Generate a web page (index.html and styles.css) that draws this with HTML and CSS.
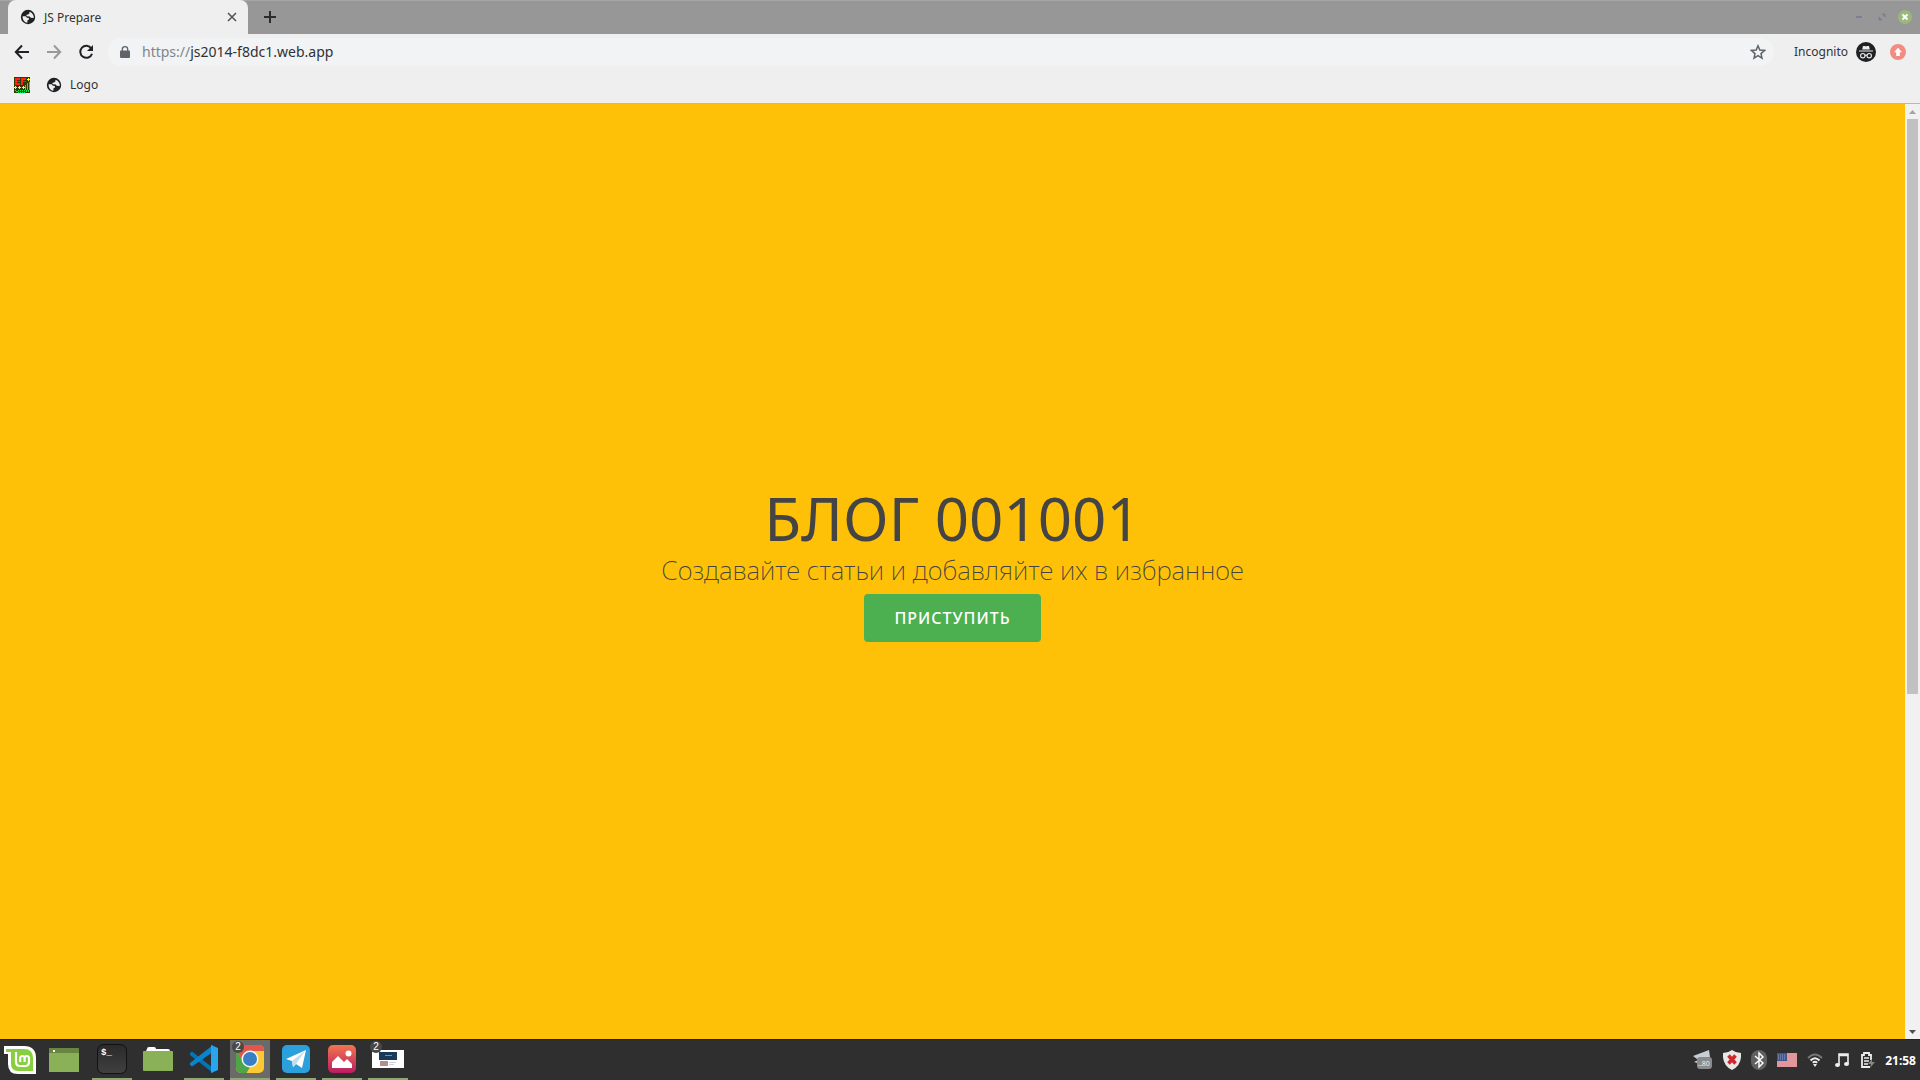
FILE: index.html
```html
<!DOCTYPE html>
<html lang="ru">
<head>
<meta charset="utf-8">
<title>JS Prepare</title>
<link rel="stylesheet" href="styles.css">
</head>
<body>
<svg class="sprite" aria-hidden="true">
  <symbol id="globe" viewBox="0 0 16 16">
    <circle cx="8" cy="8" r="7.2" fill="#202124"/>
    <path d="M2.6 7.2h3l1.3 1.5 2 .2v1.5l-1.5 1.2v2.2C4.5 13.4 2.4 10.800 2.600 7.200zM8.200 2.500l1.200.3v1.700l-1.300 1-1.600.2v1.600l3.200.2 1 1.200 1.600.2 1.800-.5C13 4.400 11 2.600 8.200 2.500z" fill="#eee"/>
  </symbol>
</svg>
<div class="screen">
  <header class="browser">
    <div class="tabs">
      <div class="tab">
        <svg class="favicon"><use href="#globe"/></svg>
        <span class="tab-title">JS Prepare</span>
        <button class="plain" aria-label="Close tab"><svg width="10" height="10" viewBox="0 0 10 10"><path d="M1 1l8 8M9 1l-8 8" stroke="#555" stroke-width="1.600"/></svg></button>
      </div>
      <button class="plain new-tab" aria-label="New tab"><svg width="12" height="12" viewBox="0 0 12 12"><path d="M6 0v12M0 6h12" stroke="#2b2b2b" stroke-width="2"/></svg></button>
      <div class="window-buttons">
        <button class="plain" aria-label="Minimize"><svg width="18" height="18" viewBox="0 0 18 18"><path d="M6 9h6" stroke="#7c8090" stroke-width="2"/></svg></button>
        <button class="plain" aria-label="Maximize"><svg width="18" height="18" viewBox="0 0 18 18"><path d="M9 6h3v3zM6 9v3h3z" fill="#7c8090" stroke="#7c8090"/></svg></button>
        <button class="plain" aria-label="Close"><svg width="18" height="18" viewBox="0 0 18 18"><circle cx="9" cy="9" r="7" fill="#9ab87c"/><path d="M6.500 6.500l5 5M11.500 6.500l-5 5" stroke="#fff" stroke-width="2"/></svg></button>
      </div>
    </div>
    <div class="toolbar">
      <div class="nav">
        <button class="plain" aria-label="Back"><svg width="16" height="16" viewBox="0 0 16 16"><path d="M15 8H2M8 1.500L1.800 8 8 14.500" fill="none" stroke="#202124" stroke-width="2"/></svg></button>
        <button class="plain" aria-label="Forward"><svg width="16" height="16" viewBox="0 0 16 16"><path d="M1 8h13M8 1.500L14.200 8 8 14.500" fill="none" stroke="#999" stroke-width="2"/></svg></button>
        <button class="plain" aria-label="Reload"><svg width="16" height="16" viewBox="0 0 16 16"><path d="M13.300 4.500A6 6 0 1 0 14 9.700" fill="none" stroke="#202124" stroke-width="2"/><path d="M15 1v6H9z" fill="#202124"/></svg></button>
      </div>
      <div class="address">
        <svg width="10" height="12" viewBox="0 0 10 12"><path d="M1 4.500h8a1 1 0 0 1 1 1V11a1 1 0 0 1-1 1H1a1 1 0 0 1-1-1V5.500a1 1 0 0 1 1-1z" fill="#5f6368"/><path d="M2.300 5V3.200a2.700 2.500 0 0 1 5.400 0V5" fill="none" stroke="#5f6368" stroke-width="1.300"/></svg>
        <a class="url" href="#"><span class="scheme">https://</span>js2014-f8dc1.web.app</a>
        <button class="plain" aria-label="Bookmark"><svg width="16" height="16" viewBox="0 0 16 16"><path d="M8 1.800l1.800 4.300 4.700.4-3.500 3.100 1 4.500L8 11.700l-4 2.400 1-4.500L1.500 6.500l4.700-.4z" fill="none" stroke="#5f6368" stroke-width="1.500"/></svg></button>
      </div>
      <span class="mode">Incognito</span>
      <svg width="20" height="20" viewBox="0 0 20 20"><circle cx="10" cy="10" r="10" fill="#202124"/><path d="M7 4h2l1 .5L11 4h2l.8 3.500H6.200zM3 8.500h14v1H3z" fill="#eee"/><g fill="none" stroke="#eee" stroke-width="1.100"><circle cx="6.800" cy="13.700" r="2.200"/><circle cx="13.200" cy="13.700" r="2.200"/><path d="M9 13.500q1-.7 2 0"/></g></svg>
      <button class="plain update" aria-label="Update"><svg width="16" height="16" viewBox="0 0 16 16"><circle cx="8" cy="8" r="8" fill="#f28b82"/><path d="M8 3.800L12 8.300h-2.200V12H6.200V8.300H4z" fill="#fff"/></svg></button>
    </div>
    <nav class="bookmarks">
      <a href="#" aria-label="EF"><svg width="16" height="16" viewBox="0 0 16 16" shape-rendering="crispEdges"><path d="M0 0h16v16H0z" fill="#333c00"/><path d="M1 1h5v2H3v1h3v1H3v1h3v2H1zM7 1h5v2H9v1h3v1H9v3H7z" fill="#ff2020"/><path d="M14 1h1v1h1v1h-1v1h-1V3h-1V2h1zM1 9h1v1h1v1H2v1H1v-1H0v-1h1zM5 9h1v1h1v1H6v1H5v-1H4v-1h1zM9 9h1v1h1v1h-1v1H9v-1H8v-1h1z" fill="#ff0"/><path d="M15.500 5v8M13.500 6v7M11.500 8v5M1 13.500h1M2 14.500h2M4 15.500h1M4 13.500h1M6 13.500h1M6 15.500h1M8 13.500h1M8 15.500h1M10 15.500h1M10 13.500h1M12.500 13v2M14.500 13v2" stroke="#00f060" fill="none"/></svg></a>
      <a class="bookmark" href="#"><svg class="favicon"><use href="#globe"/></svg>Logo</a>
    </nav>
  </header>

  <div class="viewport">
    <main class="hero">
      <h1>БЛОГ 001001</h1>
      <p>Создавайте статьи и добавляйте их в избранное</p>
      <button class="start">ПРИСТУПИТЬ</button>
    </main>
    <div class="scrollbar">
      <svg width="15" height="15" viewBox="0 0 15 15"><path d="M4 10l3.500-4L11 10z" fill="#a3a3a3"/></svg>
      <div class="track"><div class="thumb"></div></div>
      <svg width="15" height="15" viewBox="0 0 15 15"><path d="M4 6l3.500 4L11 6z" fill="#505050"/></svg>
    </div>
  </div>

  <footer class="taskbar">
    <button class="plain menu" aria-label="Menu"><svg width="34" height="32" viewBox="0 0 34 32"><path d="M1 2h20q12 0 12 12v16H15Q5 30 5 20V10H1z" fill="#fff"/><path d="M3 5h18q9 0 9 9v13H15q-7 0-7-7V8H3z" fill="#87cf3e"/><path d="M13 8v10q0 4 4 4h5q4 0 4-4v-3.500q0-2.500-2.200-2.500t-2.200 2.500V18M21.600 14.500q0-2.500-2.200-2.500t-2.200 2.500V18" fill="none" stroke="#fff" stroke-width="2.200"/></svg></button>
    <button class="plain app launcher" aria-label="Desktop"><svg width="30" height="30" viewBox="0 0 30 30"><path d="M0 4h30v24H0z" fill="#8bb158"/><path d="M0 4h30v5H0z" fill="#688642"/><path d="M4 6h2v2H4z" fill="#fff"/></svg></button>
    <button class="plain app open" aria-label="Terminal"><svg width="30" height="30" viewBox="0 0 30 30"><defs><linearGradient id="term" x2="0" y2="1"><stop stop-color="#2a2a2a"/><stop offset="1" stop-color="#404040"/></linearGradient></defs><rect x=".5" y=".5" width="29" height="29" rx="6" fill="url(#term)" stroke="#111"/><text x="4" y="11" class="prompt">$_</text></svg></button>
    <button class="plain app" aria-label="Files"><svg width="30" height="30" viewBox="0 0 30 30"><path d="M4 5q0-2 2-2h5q2 0 2 2h12q2 0 2 2v4H3V7z" fill="#fff"/><rect y="7" width="30" height="20" rx="1" fill="#8bb158"/></svg></button>
    <button class="plain app open" aria-label="Visual Studio Code"><svg width="30" height="30" viewBox="0 0 30 30"><path d="M1 9l2-1.500L24 24v5L1 11z" fill="#0075b9"/><path d="M1 21l2 1.500L24 8V1L1 19z" fill="#0a84cc"/><path d="M22 1l7 3v22l-7 3z" fill="#29a5ee"/></svg></button>
    <button class="plain app open active" aria-label="Chrome"><svg width="30" height="30" viewBox="0 0 30 30"><defs><clipPath id="round"><rect x="1" y="1" width="28" height="28" rx="5"/></clipPath></defs><g clip-path="url(#round)"><path d="M0 0h30v30H0z" fill="#fcc934"/><path d="M0 0h30v7H15L8 18 0 5z" fill="#e2574c"/><path d="M0 4l8 14 7 5-4 7H0z" fill="#4da548"/></g><circle cx="15" cy="15" r="8.500" fill="#f5f5f5"/><circle cx="15" cy="15" r="7" fill="#397fc4"/></svg><span class="count">2</span></button>
    <button class="plain app open" aria-label="Telegram"><svg width="30" height="30" viewBox="0 0 30 30"><rect x="1" y="1" width="28" height="28" rx="5" fill="#2ba0da"/><path d="M5 15L25 6l-4 18-6-4-3 3-1-6z" fill="#fff"/><path d="M11 17l13-10-9 13-3 3z" fill="#c4dcec"/></svg></button>
    <button class="plain app open" aria-label="Pictures"><svg width="30" height="30" viewBox="0 0 30 30"><defs><linearGradient id="pic" x2="0" y2="1"><stop stop-color="#f1754f"/><stop offset="1" stop-color="#b91d62"/></linearGradient></defs><rect x="1" y="1" width="28" height="28" rx="5" fill="url(#pic)"/><path d="M5 24v-6l6-6 6 6 3-3 5 5v4z" fill="#fff"/><circle cx="21.500" cy="9.500" r="3" fill="#fff"/></svg></button>
    <button class="plain app open" aria-label="Window preview"><svg width="32" height="30" viewBox="0 0 32 30"><path d="M0 6h32v18H0z" fill="#fff"/><path d="M7 8h18v8H7z" fill="#16395c"/><path d="M13 11h7v1h-7z" fill="#7190ad"/><path d="M8 17h8v5H8z" fill="#b08f8f"/><path d="M17 18h7v1h-7zM17 20h5v1h-5z" fill="#cbd3e0"/></svg><span class="count">2</span></button>
    <div class="tray">
      <svg width="20" height="20" viewBox="0 0 20 20"><path d="M0 6l16-6 1 7-13 2zM1 12l6-3 9 1-9 4z" fill="#c8ced8"/><rect x="4" y="7" width="15" height="12" rx="3" fill="#8b8b8b"/><text x="5" y="16" class="badge">..80</text></svg>
      <svg width="18" height="20" viewBox="1 0 18 20"><path d="M10 0q4 3 9 3 1 12-9 17Q0 15 1 3q5 0 9-3z" fill="#e8e8e4"/><path d="M6.500 5.500l7 8M13.500 5.500l-7 8" stroke="#d0272d" stroke-width="3.500"/></svg>
      <svg width="16" height="20" viewBox="0 0 16 20"><rect width="16" height="20" rx="8" fill="#606060"/><path d="M4 6l8 7-4 4V3l4 4-8 7" fill="none" stroke="#fff" stroke-width="1.400"/></svg>
      <svg width="20" height="14" viewBox="0 0 20 14"><path d="M0 0h20v14H0z" fill="#f2e4e4"/><path d="M0 1h20M0 3h20M0 5h20M0 7h20M0 9h20M0 11h20M0 13h20" stroke="#d04a50"/><path d="M0 0h10v8H0z" fill="#42558f"/><path d="M1 2h8M1 4h8M1 6h8" stroke="#8b98bd" stroke-dasharray="1 1"/></svg>
      <svg width="16" height="14" viewBox="0 0 16 14"><g fill="none" stroke-width="2"><path d="M1 5q7-7 14 0" stroke="#777"/><path d="M3.500 7.500q4.500-4.500 9 0M5.800 9.800q2.200-2 4.400 0" stroke="#eee"/></g><path d="M6 11h4l-2 3z" fill="#eee"/></svg>
      <svg width="18" height="14" viewBox="-2 0 18 14"><path d="M4 12V1h9v10M4 2.500h9" fill="none" stroke="#eee" stroke-width="1.600"/><ellipse cx="2.500" cy="12" rx="2.500" ry="2" fill="#eee"/><ellipse cx="11.500" cy="11" rx="2.500" ry="2" fill="#eee"/></svg>
      <svg width="14" height="16" viewBox="0 0 14 16"><path d="M9 15H1V3h2V1h5v2h2v5" fill="none" stroke="#eee" stroke-width="1.800"/><path d="M3 6h5M3 9h5M3 12h4" stroke="#eee" stroke-width="1.500"/><path d="M11 7l-4 5h3l-1 4 5-6h-3z" fill="#888"/></svg>
      <time>21:58</time>
    </div>
  </footer>
</div>
</body>
</html>
```

FILE: styles.css
```css
* { box-sizing: border-box; }
body {
  margin: 0;
  font-family: "Noto Sans", sans-serif;
  font-size: 12px;
  color: #333;
}
svg { display: block; flex: none; }
a { color: inherit; text-decoration: none; }
.sprite { position: absolute; width: 0; height: 0; }
.plain {
  display: flex;
  align-items: center;
  justify-content: center;
  padding: 0;
  border: 0;
  background: none;
}
.screen { display: flex; flex-direction: column; height: 100vh; }

.browser { background: #efefef; border-bottom: 1px solid #b9b9b9; }
.tabs {
  display: flex;
  align-items: center;
  height: 34px;
  padding: 0 6px 0 8px;
  background: #979797;
  box-shadow: inset 0 1px #a6a6a6;
}
.tab {
  display: flex;
  align-items: center;
  gap: 8px;
  width: 240px;
  height: 34px;
  padding: 0 11px 0 12px;
  background: #efefef;
  border-radius: 8px 8px 0 0;
}
.favicon { width: 16px; height: 16px; }
.tab-title { flex: 1; }
.new-tab { margin-left: 16px; }
.window-buttons { display: flex; align-items: center; gap: 5px; margin-left: auto; }
.toolbar { display: flex; align-items: center; height: 36px; padding: 0 14px; }
.nav { display: flex; gap: 16px; margin-right: 14px; }
.address {
  display: flex;
  align-items: center;
  flex: 1;
  gap: 12px;
  height: 28px;
  padding: 0 8px 0 12px;
  border-radius: 14px;
  background: #f1f3f4;
}
.url { flex: 1; padding-bottom: 2px; font-size: 14px; color: #303134; }
.scheme { color: #80868b; }
.mode { margin: 0 8px 0 20px; padding-bottom: 2px; }
.update { margin-left: 14px; }
.bookmarks { display: flex; align-items: center; gap: 16px; height: 33px; padding: 0 14px 4px; }
.bookmark { display: flex; align-items: center; gap: 8px; }

.viewport { display: flex; flex: 1; min-height: 0; }
.hero {
  display: flex;
  flex-direction: column;
  align-items: center;
  justify-content: center;
  flex: 1;
  padding-bottom: 16px;
  background: #ffc107;
  color: #444;
}
.hero h1 { margin: 0; font-size: 60px; font-weight: 400; line-height: 64px; }
.hero p { margin: 0; font-size: 26px; font-weight: 200; line-height: 40px; }
.start {
  height: 48px;
  margin-top: 4px;
  padding: 0 30px;
  border: 0;
  border-radius: 4px;
  background: #4caf50;
  color: #fff;
  font: 500 16px "Noto Sans", sans-serif;
  letter-spacing: 1px;
}
.scrollbar { display: flex; flex-direction: column; width: 15px; background: #f1f1f1; }
.track { flex: 1; padding: 0 2px; }
.thumb { height: 63.5%; background: #c1c1c1; }

.taskbar {
  display: flex;
  height: 41px;
  padding: 0 4px 0 3px;
  background: #2f2f2f;
  border-top: 1px solid #222;
}
.menu { width: 34px; margin-right: 7px; }
.app { position: relative; width: 40px; margin-right: 6px; border-bottom: 2px solid transparent; }
.app.launcher { margin-right: 8px; }
.app.open { border-color: #8fa876; }
.app.active { background: #6a6a6a; }
.count {
  position: absolute;
  top: 1px;
  left: 2px;
  width: 12px;
  height: 12px;
  border-radius: 6px;
  background: #484848;
  color: #fff;
  font-size: 10px;
  line-height: 12px;
}
.prompt { fill: #fff; font: bold 9px "Liberation Mono", monospace; }
.badge { fill: #eee; font: 7px "Noto Sans", sans-serif; }
.tray { display: flex; align-items: center; gap: 10px; margin-left: auto; color: #fff; font-weight: 700; }
```
